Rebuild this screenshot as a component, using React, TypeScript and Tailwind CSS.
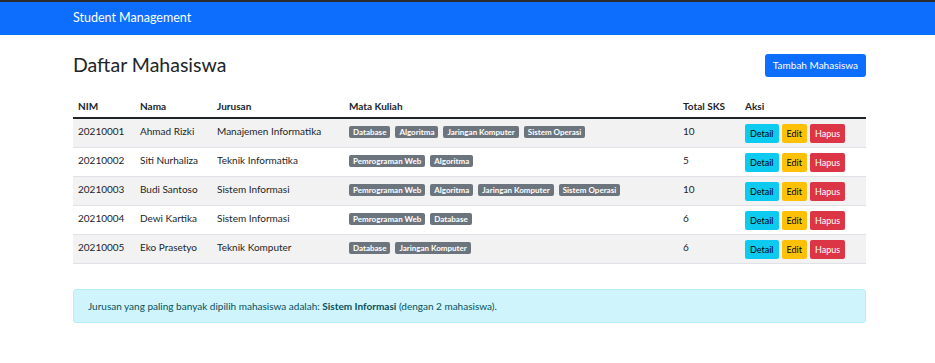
import React from "react";

type Mahasiswa = {
  nim: string;
  nama: string;
  jurusan: string;
  matkul: string[];
  sks: number;
};

const data: Mahasiswa[] = [
  { nim: "20210001", nama: "Ahmad Rizki", jurusan: "Manajemen Informatika", matkul: ["Database", "Algoritma", "Jaringan Komputer", "Sistem Operasi"], sks: 10 },
  { nim: "20210002", nama: "Siti Nurhaliza", jurusan: "Teknik Informatika", matkul: ["Pemrograman Web", "Algoritma"], sks: 5 },
  { nim: "20210003", nama: "Budi Santoso", jurusan: "Sistem Informasi", matkul: ["Pemrograman Web", "Algoritma", "Jaringan Komputer", "Sistem Operasi"], sks: 10 },
  { nim: "20210004", nama: "Dewi Kartika", jurusan: "Sistem Informasi", matkul: ["Pemrograman Web", "Database"], sks: 6 },
  { nim: "20210005", nama: "Eko Prasetyo", jurusan: "Teknik Komputer", matkul: ["Database", "Jaringan Komputer"], sks: 6 },
];

export default function App() {
  return (
    <div className="min-h-[363px] bg-white text-[#212529] font-['Lato',sans-serif]">
      {/* Navbar */}
      <div className="h-[35px] bg-[#0d6efd] border-t-2 border-[#2b2b2b] flex items-center pl-[73px]">
        <span className="text-white text-[12.5px]">Student Management</span>
      </div>

      <div className="pl-[73px] pr-[69px]">
        {/* Header */}
        <div className="flex items-center justify-between mt-[18px] mb-[17px]">
          <h2 className="text-[19.5px] leading-[24px] text-[#212529]">Daftar Mahasiswa</h2>
          <button className="h-[23px] px-[8px] rounded-[3px] bg-[#0d6efd] text-white text-[10px]">
            Tambah Mahasiswa
          </button>
        </div>

        {/* Table */}
        <table className="w-full table-fixed border-collapse text-[10px]">
          <colgroup>
            <col className="w-[62px]" />
            <col className="w-[77px]" />
            <col className="w-[132px]" />
            <col className="w-[334px]" />
            <col className="w-[62px]" />
            <col />
          </colgroup>
          <thead>
            <tr className="border-b-2 border-[#212529]">
              {["NIM", "Nama", "Jurusan", "Mata Kuliah", "Total SKS", "Aksi"].map((h) => (
                <th key={h} className="text-left font-bold px-[5px] h-[24px] leading-[14px] align-middle">
                  {h}
                </th>
              ))}
            </tr>
          </thead>
          <tbody>
            {data.map((m, i) => (
              <tr key={m.nim} className={`border-b border-[#dee2e6] ${i % 2 === 0 ? "bg-[#f2f2f2]" : "bg-white"}`}>
                <td className="px-[5px] pt-[5px] pb-[4px] align-top leading-[14px]">{m.nim}</td>
                <td className="px-[5px] pt-[5px] pb-[4px] align-top leading-[14px]">{m.nama}</td>
                <td className="px-[5px] pt-[5px] pb-[4px] align-top leading-[14px]">{m.jurusan}</td>
                <td className="px-[5px] pt-[7px] pb-[4px] align-top">
                  <div className="flex gap-[5px]">
                    {m.matkul.map((mk) => (
                      <span
                        key={mk}
                        className="inline-flex items-center h-[12px] px-[4px] rounded-[2px] bg-[#6c757d] text-white text-[8px] font-bold leading-none"
                      >
                        {mk}
                      </span>
                    ))}
                  </div>
                </td>
                <td className="px-[5px] pt-[5px] pb-[4px] align-top leading-[14px]">{m.sks}</td>
                <td className="px-[5px] pt-[5px] pb-[4px] align-top">
                  <div className="flex gap-[3px]">
                    <button className="h-[19px] px-[5px] rounded-[2px] bg-[#0dcaf0] text-black text-[9px]">Detail</button>
                    <button className="h-[19px] px-[5px] rounded-[2px] bg-[#ffc107] text-black text-[9px]">Edit</button>
                    <button className="h-[19px] px-[5px] rounded-[2px] bg-[#dc3545] text-white text-[9px]">Hapus</button>
                  </div>
                </td>
              </tr>
            ))}
          </tbody>
        </table>

        {/* Alert */}
        <div className="mt-[25px] h-[34px] flex items-center px-[14px] rounded-[3px] bg-[#cff4fc] border border-[#b6effb] text-[#055160] text-[10px]">
          <span>
            Jurusan yang paling banyak dipilih mahasiswa adalah: <strong className="font-bold">Sistem Informasi</strong> (dengan 2 mahasiswa).
          </span>
        </div>
      </div>
    </div>
  );
}
